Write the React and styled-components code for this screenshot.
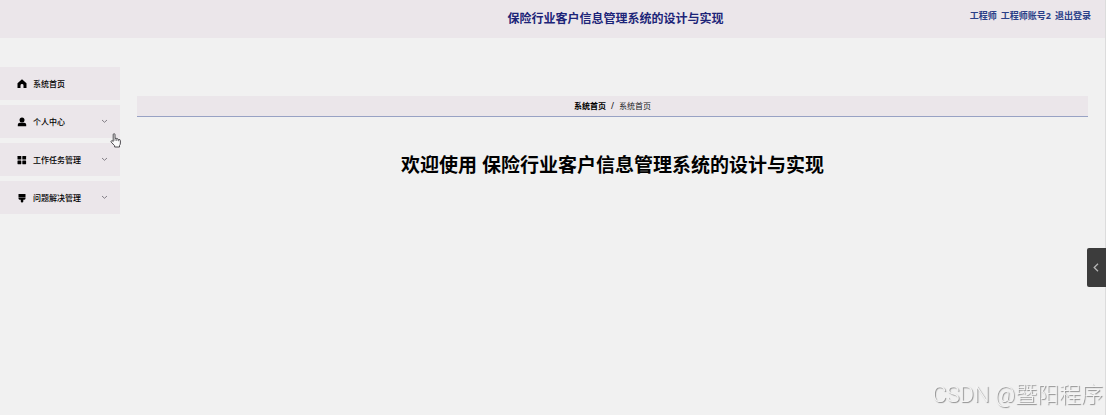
import React from "react";
import styled, { createGlobalStyle } from "styled-components";

const GlobalStyle = createGlobalStyle`
  * { box-sizing: border-box; }
  body {
    margin: 0;
    background: #f1f1f1;
    color: #000;
    font-family: "Noto Sans", "Noto Sans CJK SC", sans-serif;
    font-size: 8px;
    line-height: 12px;
  }
`;

const Page = styled.div`
  min-height: 100vh;
  border-right: 1px solid #dcdcdc;
`;

const Header = styled.header`
  display: grid;
  grid-template-columns: 1fr auto 1fr;
  height: 38px;
  padding: 0 14px 0 140px;
  background: #ebe6ea;
  color: #1c2478;
`;

const SiteTitle = styled.div`
  grid-column: 2;
  align-self: center;
  font-size: 12px;
  line-height: 18px;
  font-weight: 700;
  white-space: nowrap;
`;

const Account = styled.div`
  display: flex;
  justify-content: flex-end;
  gap: 4px;
  padding-top: 9px;
  color: #2a4088;
  font-size: 9px;
  line-height: 14px;
  font-weight: 700;
  white-space: nowrap;
`;

const Logout = styled.a`
  color: inherit;
  text-decoration: none;
`;

const Body = styled.div`
  display: flex;
  align-items: flex-start;
  padding-top: 29px;
`;

const Sidebar = styled.nav`
  display: flex;
  flex-direction: column;
  gap: 5px;
  flex: 0 0 120px;
`;

const MenuItem = styled.button`
  display: flex;
  align-items: center;
  gap: 6px;
  height: 33px;
  padding: 0 12px 0 17px;
  border: 0;
  background: #ebe6ea;
  color: #000;
  font: inherit;
  font-weight: 500;
  text-align: left;
  cursor: pointer;
`;

const MenuLabel = styled.span`
  flex: 1;
`;

const Icon = styled.svg`
  display: block;
  flex: none;
`;

const Main = styled.main`
  flex: 1;
  min-width: 0;
  padding: 29px 17px 0;
`;

const Breadcrumb = styled.nav`
  display: flex;
  justify-content: center;
  align-items: center;
  gap: 5px;
  height: 21px;
  border-bottom: 1px solid #98a2c4;
  background: #ebe6ea;
`;

const CrumbLink = styled.a`
  color: #000;
  font-weight: 700;
  text-decoration: none;
`;

const Crumb = styled.span`
  color: #202124;
`;

const Welcome = styled.h1`
  margin: 34px 0 0;
  font-size: 19px;
  line-height: 28px;
  font-weight: 700;
  text-align: center;
`;

const DrawerButton = styled.button`
  position: fixed;
  top: 248px;
  right: 0;
  display: flex;
  align-items: center;
  justify-content: center;
  width: 19px;
  height: 39px;
  padding: 0;
  border: 0;
  border-radius: 2px 0 0 2px;
  background: #3c3c3c;
`;

const Pointer = styled.svg`
  position: absolute;
  left: 110px;
  top: 133px;
  pointer-events: none;
`;

const Watermark = styled.div`
  position: fixed;
  right: 3px;
  bottom: 4px;
  color: #f4f4f4;
  font-family: Roboto, "Noto Sans CJK SC", sans-serif;
  font-size: 22px;
  line-height: 32px;
  font-weight: 300;
  text-shadow: 1px 1px 1px #8c8c8c;
  white-space: nowrap;
`;

const glyphs = {
  home: <path d="M5 0.3 L0.5 4.3 V9 H3.5 V6.4 Q3.5 5 5 5 Q6.5 5 6.5 6.4 V9 H9.5 V4.3 Z" />,
  user: (
    <>
      <circle cx="5" cy="3" r="2.5" />
      <path d="M0.8 9.2 V7.8 Q0.8 5.8 2.8 5.8 H7.2 Q9.2 5.8 9.2 7.8 V9.2 Z" />
    </>
  ),
  grid: (
    <>
      <rect x="0.5" y="1" width="3.8" height="3.6" rx="0.4" />
      <rect x="5.3" y="1" width="3.8" height="3.6" rx="0.4" />
      <rect x="0.5" y="5.6" width="3.8" height="3.6" rx="0.4" />
      <rect x="5.3" y="5.6" width="3.8" height="3.6" rx="0.4" />
    </>
  ),
  brush: (
    <>
      <path d="M1.5 1 H8.5 V4.2 H1.5 Z" />
      <path d="M1.5 4.4 H8.5 V5.6 Q8.5 6.7 7.4 6.7 H6.3 V8.5 Q6.3 9.6 5 9.6 Q3.8 9.6 3.8 8.5 V6.7 H2.6 Q1.5 6.7 1.5 5.6 Z" />
    </>
  ),
};

const menu = [
  { label: "系统首页", icon: "home" },
  { label: "个人中心", icon: "user", expandable: true },
  { label: "工作任务管理", icon: "grid", expandable: true },
  { label: "问题解决管理", icon: "brush", expandable: true },
];

export default function App() {
  return (
    <Page>
      <GlobalStyle />
      <Header>
        <SiteTitle>保险行业客户信息管理系统的设计与实现</SiteTitle>
        <Account>
          <span>工程师</span>
          <span>工程师账号2</span>
          <Logout href="#logout">退出登录</Logout>
        </Account>
      </Header>
      <Body>
        <Sidebar>
          {menu.map((item) => (
            <MenuItem key={item.label} type="button">
              <Icon width="10" height="10" viewBox="0 0 10 10">
                {glyphs[item.icon]}
              </Icon>
              <MenuLabel>{item.label}</MenuLabel>
              {item.expandable && (
                <Icon width="7" height="8" viewBox="0 0 7 8" fill="none" stroke="#77747a">
                  <path d="M1 2 L3.5 4.3 L6 2" strokeWidth="0.9" />
                </Icon>
              )}
            </MenuItem>
          ))}
        </Sidebar>
        <Main>
          <Breadcrumb aria-label="breadcrumb">
            <CrumbLink href="#home">系统首页</CrumbLink>
            <span>/</span>
            <Crumb>系统首页</Crumb>
          </Breadcrumb>
          <Welcome>欢迎使用 保险行业客户信息管理系统的设计与实现</Welcome>
        </Main>
      </Body>
      <DrawerButton type="button" aria-label="展开">
        <Icon width="7" height="9" viewBox="0 0 7 9" fill="none" stroke="#b4b4b4">
          <path d="M5 0.8 L1.2 4.5 L5 8.2" strokeWidth="1.3" />
        </Icon>
      </DrawerButton>
      <Pointer width="12" height="15" viewBox="0 0 12 15">
        <path
          d="M3.2 8.5 V1.7 Q3.2 0.7 4.1 0.7 Q5 0.7 5 1.7 V5.4 Q6.5 4.7 6.8 5.9 Q8.2 5.3 8.6 6.6 Q10.4 6.1 10.4 7.7 V10 Q10.4 11.5 9.5 12.5 V14 H4.6 V12.7 L1.2 9.1 Q0.7 8.1 1.6 7.7 Q2.3 7.5 3.2 8.5 Z"
          fill="#fafafa"
          stroke="#3c3a40"
          strokeWidth="0.9"
        />
        <path d="M5 5.4 V7.8 M6.8 5.9 V8 M8.6 6.6 V8.2" fill="none" stroke="#3c3a40" strokeWidth="0.7" />
      </Pointer>
      <Watermark>CSDN @暨阳程序</Watermark>
    </Page>
  );
}
